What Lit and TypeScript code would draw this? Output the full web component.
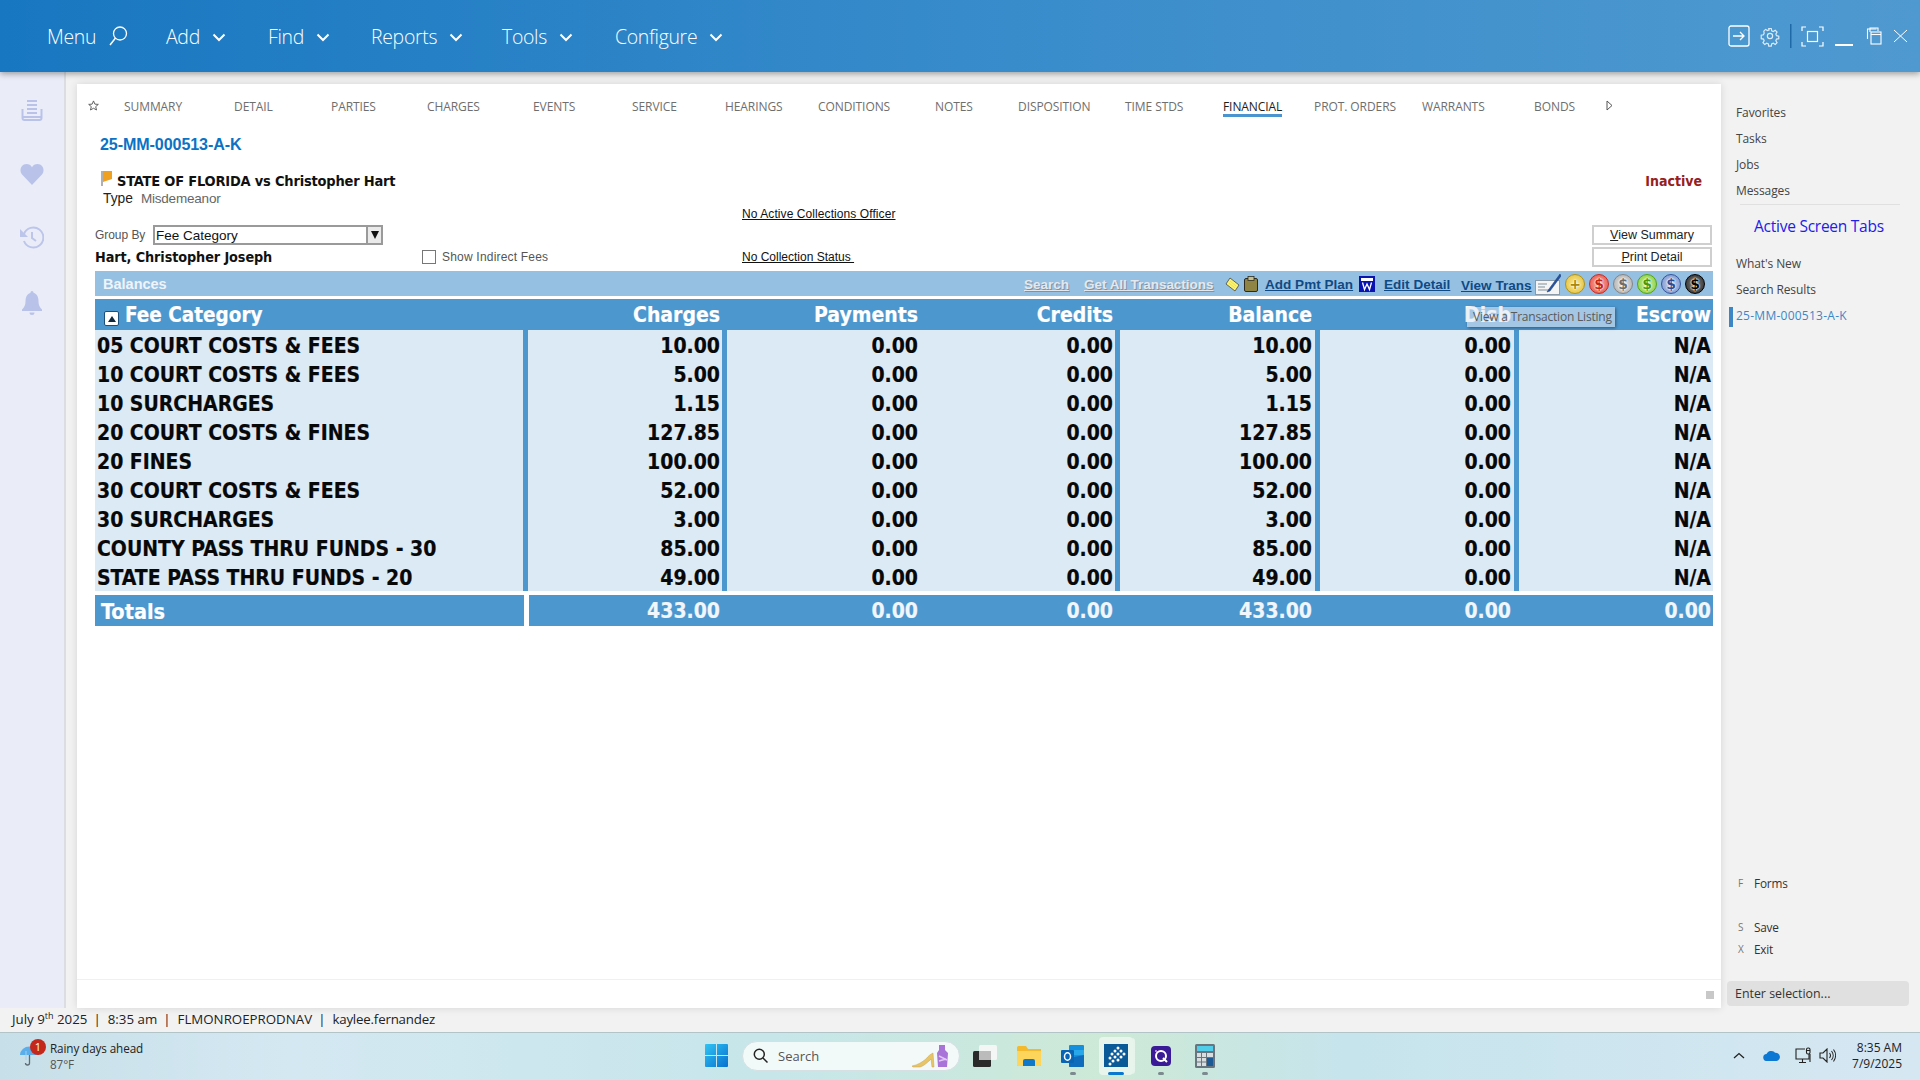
import { LitElement, html, css, svg } from "lit";
import { customElement } from "lit/decorators.js";

const chev = html`<svg class="chev" viewBox="0 0 14 9"><path d="M1.500 1.500 7 7l5.500-5.500" fill="none" stroke="#fff" stroke-width="2"/></svg>`;
const TABS = ["SUMMARY","DETAIL","PARTIES","CHARGES","EVENTS","SERVICE","HEARINGS","CONDITIONS","NOTES","DISPOSITION","TIME STDS","FINANCIAL","PROT. ORDERS","WARRANTS","BONDS"];
const ROWS: string[][] = [
  ["05 COURT COSTS & FEES","10.00","10.00"],
  ["10 COURT COSTS & FEES","5.00","5.00"],
  ["10 SURCHARGES","1.15","1.15"],
  ["20 COURT COSTS & FINES","127.85","127.85"],
  ["20 FINES","100.00","100.00"],
  ["30 COURT COSTS & FEES","52.00","52.00"],
  ["30 SURCHARGES","3.00","3.00"],
  ["COUNTY PASS THRU FUNDS - 30","85.00","85.00"],
  ["STATE PASS THRU FUNDS - 20","49.00","49.00"],
];

@customElement("app-root")
export class AppRoot extends LitElement {
  static styles = css`
    :host { display:flex; flex-direction:column; width:1920px; height:1080px; overflow:hidden; background:#f2f2f2; font-family:"Open Sans",sans-serif; color:#222; }
    svg { display:block; flex:none; }

    .hdr { height:72px; flex:none; display:flex; align-items:center; position:relative; z-index:3; padding-left:47px; background:linear-gradient(90deg,#1877c1,#3a8dcb 55%,#4f99d0); box-shadow:0 2px 6px rgba(0,0,0,.35); color:#fff; }
    .nav { display:grid; grid-template-columns:119px 102px 103px 131px 113px auto; font-size:19.400px; font-weight:300; letter-spacing:-.28px; }
    .nav div { display:flex; align-items:center; gap:12px; }
    .chev { width:14px; height:9px; margin-top:3px; }
    .hicons { margin-left:auto; margin-right:12px; display:flex; align-items:center; }
    .hicons svg { overflow:visible; }

    .mid { flex:1; display:flex; min-height:0; }
    .side { width:64px; flex:none; background:#eaedf8; border-right:2px solid #dcdde2; display:flex; flex-direction:column; align-items:center; padding-top:27px; gap:41.500px; }
    .card { width:1644px; margin:12px 0 0 11px; background:#fff; box-shadow:0 0 8px rgba(0,0,0,.12); display:flex; flex-direction:column; }

    .tabs { display:grid; grid-template-columns:36px 110px 97px 96px 106px 99px 93px 93px 117px 83px 107px 98px 91px 108px 112px 72px auto; height:22px; margin:11px 0 0 11px; align-items:start; font-size:12px; letter-spacing:-.08px; color:#6e6e6e; }
    .tabs > svg { margin-top:5px; }
    .tab { display:flex; height:22px; }
    .tab span { height:22px; line-height:23px; box-sizing:border-box; }
    .tab.on span { color:#1d1d1d; border-bottom:3px solid #4a95cf; }

    .body { padding-left:18px; }
    .caseno { margin:17px 0 0 5px; font:bold 16.100px/20px "Liberation Sans",sans-serif; color:#0b72c4; letter-spacing:-.1px; }
    .title { display:flex; align-items:center; height:20px; margin:17px 0 0 5px; }
    .title svg { margin-top:-5px; }
    .title b { font:bold 14.500px/20px "DejaVu Sans Condensed","Liberation Sans",sans-serif; color:#111; margin-left:5px; letter-spacing:-.2px; }
    .inactive { margin-left:auto; margin-right:19px; font:bold 14px/20px "DejaVu Sans Condensed","Liberation Sans",sans-serif; color:#962020; }
    .type { margin-left:8px; font:13.800px/16px "Liberation Sans",sans-serif; height:16px; display:flex; gap:8px; }
    .type i { font-style:normal; color:#666; letter-spacing:-.2px; font-size:13.500px; }
    .coll { margin-left:647px; height:18px; font:12px/14px "Liberation Sans",sans-serif; letter-spacing:.08px; }
    .lnk { text-decoration:underline; color:#111; }
    .ctl { display:grid; grid-template-columns:327px 320px 1fr 120px; grid-auto-rows:20px; row-gap:2px; padding-right:9px; align-items:center; font:12px "Liberation Sans",sans-serif; }
    .grp { display:flex; align-items:center; color:#555; }
    .grp label { width:58px; letter-spacing:-.05px; }
    .sel { width:230px; height:20px; box-sizing:border-box; border:2px solid #9a9a9a; display:flex; align-items:center; justify-content:space-between; font-size:13.500px; color:#111; padding-left:1px; }
    .sel s { width:13px; height:16px; background:#eaeaea; border-left:2px solid #9a9a9a; display:flex; justify-content:center; align-items:center; }
    .sel s::after { content:""; border:4px solid transparent; border-top:8px solid #111; border-bottom:0; }
    .btn { height:20px; box-sizing:border-box; border:2px solid #cfcfcf; display:flex; align-items:center; justify-content:center; font-size:12.500px; color:#222; }
    .btn u { text-decoration:underline; }
    .name { font:bold 14.300px "DejaVu Sans Condensed","Liberation Sans",sans-serif; color:#111; letter-spacing:-.1px; }
    .chk { display:flex; align-items:center; gap:6px; color:#555; letter-spacing:.2px; }
    .chk i { width:12px; height:12px; border:1px solid #777; }

    .bar { margin:4px 8px 0 0; height:25px; background:#96c0e2; display:flex; align-items:center; justify-content:space-between; padding:0 6px 0 8px; color:#fff; font:bold 13.500px "Liberation Sans",sans-serif; }
    .bar > b { color:#eef4fa; font-size:14.500px; }
    .tools { display:grid; grid-template-columns:60px 141px 19px 21px 94px 25px 77px 74px 28px repeat(6,24px); align-items:center; padding-top:1px; }
    .tools span.dis { color:#e4e8ec; text-decoration:underline; text-shadow:1px 1px 0 #8192a3; letter-spacing:-.03px; }
    .tools span.act { color:#0e4a85; text-decoration:underline; letter-spacing:.03px; }
    .tools span.low2 { margin-top:3px; }
    .coin { width:20px; height:20px; box-sizing:border-box; border-radius:50%; border:1px solid; display:flex; align-items:center; justify-content:center; font:bold 14px/1 "DejaVu Sans",sans-serif; margin-left:2px; text-shadow:0 0 1px #fff,0 0 1.500px #fff,0 0 2px #fff; }
    .gold { border-color:#b39210; background:radial-gradient(#f8e9a0,#e2bd2e); color:#a8860f; }
    .red { border-color:#c82a20; background:radial-gradient(#f6b0aa,#e8483c); color:#c8221a; }
    .gray { border-color:#858585; background:radial-gradient(#e8e8e8,#a8a8a8); color:#6c6c6c; }
    .green { border-color:#52a512; background:radial-gradient(#d2f0a8,#7ccc30); color:#459a0c; }
    .blue { border-color:#34559e; background:radial-gradient(#c8d4ee,#6f8ccc); color:#2e4c96; }
    .black { border-color:#000; background:radial-gradient(#888,#222); color:#050505; }

    .tbl { margin-top:3px; position:relative; width:1618px; font:bold 21px "DejaVu Sans Condensed","Liberation Sans",sans-serif; -webkit-text-stroke:.2px currentColor; }
    .r { display:grid; grid-template-columns:433px 199px 195px 198px 200px 199px 194px; height:29px; align-items:center; }
    .r > div { text-align:right; padding-top:1px; }
    .rows .r > div { padding-top:3px; }
    .r > div:nth-child(1) { text-align:left; padding-left:2px; }
    .r > div:nth-child(2) { padding-right:7px; }
    .r > div:nth-child(3) { padding-right:4px; }
    .r > div:nth-child(4) { padding-right:7px; }
    .r > div:nth-child(5) { padding-right:8px; }
    .r > div:nth-child(6) { padding-right:8px; }
    .r > div:nth-child(7) { padding-right:2px; }
    .hd { height:31px; background:#4d97cf; color:#fff; }
    .hd > div:nth-child(1) { display:flex; align-items:center; padding-left:9px; gap:6px; font-size:20.500px; }
    .sort { width:13px; height:13px; border:1px solid #1d4f7c; border-radius:2px; background:#fff; margin-top:7px; display:flex; align-items:center; justify-content:center; }
    .sort::after { content:""; border:4px solid transparent; border-bottom:6px solid #12283c; border-top:0; }
    .rows { background:#dceaf6; color:#080808; height:261px; }
    .rows .r { background:linear-gradient(#4d97cf,#4d97cf) 428px 0/5px 100% no-repeat,linear-gradient(#4d97cf,#4d97cf) 627px 0/5px 100% no-repeat,linear-gradient(#4d97cf,#4d97cf) 1020px 0/5px 100% no-repeat,linear-gradient(#4d97cf,#4d97cf) 1220px 0/5px 100% no-repeat,linear-gradient(#4d97cf,#4d97cf) 1419px 0/5px 100% no-repeat; }
    .tot { height:31px; margin-top:4px; background:linear-gradient(90deg,#4d97cf 429px,#fff 429px,#fff 434px,#4d97cf 434px); color:#f0f6fb; }
    .tot > div:nth-child(1) { padding-left:6px; font-size:21.500px; color:#fff; }
    .tip { position:absolute; left:1372px; top:8px; width:148px; height:20px; box-sizing:border-box; background:rgba(222,232,241,.6); box-shadow:1px 1px 3px rgba(0,0,0,.4); font:12px/20px "Open Sans",sans-serif; -webkit-text-stroke:0; letter-spacing:-.2px; color:#5a5a5a; padding-left:6px; white-space:nowrap; }

    .foot { margin-top:auto; height:29px; border-top:1px solid #f0f0f0; box-sizing:border-box; display:flex; align-items:center; justify-content:flex-end; padding:0 7px 0 0; }
    .foot i { width:8px; height:8px; background:#c8c8c8; margin-top:2px; }

    .rp { flex:1; display:flex; flex-direction:column; padding:28px 0 2px 15px; font-size:12px; letter-spacing:-.1px; color:#444; }
    .it { height:26px; line-height:26px; position:relative; }
    .hr { width:160px; height:1px; background:#e0e0e0; margin:0 0 0 4px; }
    .ast { height:24px; line-height:24px; margin:9px 0 13px 18px; font-size:15.500px; letter-spacing:-.25px; color:#2020e8; }
    .cur { color:#3d86c6; letter-spacing:.25px; }
    .cur::before { content:""; position:absolute; left:-7px; top:4px; width:4px; height:20px; background:#3d86c6; }
    .low { margin-top:auto; display:flex; flex-direction:column; font-size:11.800px; letter-spacing:-.2px; color:#333; }
    .low div { display:flex; height:22px; align-items:center; }
    .low i { width:18px; padding-left:2px; box-sizing:border-box; font-style:normal; font-size:10px; color:#777; }
    .gapb { margin-top:22px; }
    .inp { width:182px; height:25px; margin:21px 0 0 -9px; background:#e0e0e0; border-radius:4px; padding-left:8px; box-sizing:border-box; line-height:25px; font-size:12.400px; letter-spacing:0; color:#333; }

    .st { height:24px; flex:none; font-size:13.300px; line-height:22px; padding-left:12px; color:#222; }
    .st sup { font-size:9px; line-height:0; }
    .st em { font-style:normal; margin:0 7px 0 6px; }
    .st span { letter-spacing:-.2px; }
    .tb { height:48px; flex:none; box-sizing:border-box; padding-bottom:2px; border-top:1px solid #b3c4c8; display:grid; grid-template-columns:705px 1fr auto; align-items:center; background:linear-gradient(90deg,#c7dfe8 0,#d4e8f2 15%,#c6e6ea 40%,#cde9d6 58%,#c6e4ec 70%,#d6e7f2 100%); }
    .wx { display:flex; align-items:center; padding-left:20px; position:relative; }
    .wx .bd { position:absolute; left:30px; top:-1px; width:16px; height:16px; border-radius:50%; background:#c4281c; color:#fff; font-size:11px; line-height:16px; text-align:center; }
    .wx p { margin:0 0 0 10px; font-size:11.700px; line-height:16px; letter-spacing:-.1px; color:#222; }
    .wx p span { display:block; color:#555; }
    .ct { display:flex; align-items:center; }
    .sb { width:218px; height:30px; margin-left:14px; box-sizing:border-box; border-radius:15px; background:rgba(246,251,251,.9); border:1px solid #d6e0e2; display:flex; align-items:center; padding-left:10px; font-size:13px; color:#555; }
    .sb span { margin:0 auto 0 10px; }
    .ti { position:relative; height:38px; display:flex; align-items:center; justify-content:center; }
    .ti::after { content:""; position:absolute; bottom:0; left:50%; margin-left:-3px; width:6px; height:3px; border-radius:2px; background:#7c8a90; }
    .ti.n::after { display:none; }
    .ti.cur2 { background:rgba(255,255,255,.55); border-radius:4px; box-shadow:3px 0 0 -1px rgba(255,255,255,.5); }
    .ti.cur2::after { width:16px; margin-left:-8px; background:#0b78d0; }
    .tr { display:flex; align-items:center; padding-right:18px; color:#222; }
    .clk { margin-left:16px; text-align:right; font-size:12px; line-height:16px; letter-spacing:0; }
  `;

  private tool(cls: string, t: string) { return html`<span class=${cls}>${t}</span>`; }

  render() {
    return html`
      <div class="hdr">
        <div class="nav">
          <div>Menu <svg width="20" height="22" viewBox="0 0 20 22"><circle cx="12" cy="8.500" r="6.500" fill="none" stroke="#fff" stroke-width="1.300"/><path d="M7.500 13 2 20" stroke="#fff" stroke-width="1.500"/></svg></div>
          <div>Add ${chev}</div><div>Find ${chev}</div><div>Reports ${chev}</div><div>Tools ${chev}</div><div>Configure ${chev}</div>
        </div>
        <div class="hicons">
          <svg width="22" height="22" viewBox="0 0 22 22"><rect x="1" y="1" width="20" height="20" rx="2" fill="none" stroke="#fff" stroke-width="1.300"/><path d="M5 11h11M12 7l4 4-4 4" fill="none" stroke="#fff" stroke-width="1.300"/></svg>
          <svg style="margin-left:11px" width="18" height="18" viewBox="0 0 24 24" fill="none" stroke="#dcebf7" stroke-width="1.600"><circle cx="12" cy="12" r="3.500"/><path d="M10.300 2h3.400l.5 3 2.200 1 2.600-1.600 2.400 2.400-1.600 2.600.9 2.200 3 .6v3.400l-3 .5-.9 2.200 1.600 2.600-2.400 2.400-2.600-1.600-2.200.9-.5 3h-3.400l-.5-3-2.200-.9-2.600 1.600-2.400-2.400 1.600-2.600-.9-2.200-3-.5V11l3-.6.9-2.200L3.700 5.600 6.100 3.200l2.600 1.600 2.200-1z"/></svg>
          <svg style="margin-left:11px" width="2" height="24"><rect width="1.500" height="24" fill="#1f6aa6"/></svg>
          <svg style="margin-left:9px" width="23" height="21" viewBox="0 0 23 21" fill="none" stroke="#fff" stroke-width="1.200"><path d="M5 1H1v4M18 1h4v4M1 16v4h4M22 16v4h-4"/><rect x="6.500" y="5.500" width="10" height="10"/></svg>
          <svg style="margin-left:11px;margin-top:18px" width="18" height="2"><rect width="18" height="2" fill="#fff"/></svg>
          <svg style="margin-left:13px" width="16" height="18" viewBox="0 0 16 18" fill="none" stroke="#fff" stroke-width="1.100"><path d="M4 5V1h8v3"/><path d="M1.500 12V2h9"/><rect x="5" y="5" width="10" height="12" fill="#4f99d0"/><path d="M5 7.500h10"/></svg>
          <svg style="margin-left:11px" width="15" height="14" viewBox="0 0 15 14"><path d="M1 1l13 12M14 1 1 13" stroke="#fff" stroke-width="1"/></svg>
        </div>
      </div>

      <div class="mid">
        <div class="side">
          <svg width="22" height="22" viewBox="0 0 22 22" fill="none" stroke="#b9c3ea" stroke-width="2"><path d="M6 2h10M6 6h10M6 10h10M6 14h10"/><path d="M1.500 10v9a2 2 0 0 0 2 2h15a2 2 0 0 0 2-2v-9" /><path d="M1.500 18h19"/></svg>
          <svg width="24" height="22" viewBox="0 0 24 22"><path fill="#b9c3ea" d="M12 22 2 11.500C-1 8 .5 1 6.500 1c2.500 0 4.300 1.200 5.500 3.200C13.200 2.200 15 1 17.500 1c6 0 7.500 7 4.500 10.500z"/></svg>
          <svg width="24" height="23" viewBox="0 0 24 23" fill="none" stroke="#bcc5ea" stroke-width="2"><path d="M4 8a10 10 0 1 1 0 7"/><path fill="#bcc5ea" stroke="none" d="M0 3l0 8 8 0z"/><path d="M12 6v6l4 3"/></svg>
          <svg width="20" height="24" viewBox="0 0 20 24"><path fill="#b9c3ea" d="M10 0c1 0 1.500.8 1.500 1.800C15 3 16.500 6 16.500 10c0 4 1 6 3.500 8.500V20H0v-1.500C2.500 16 3.500 14 3.500 10c0-4 1.500-7 5-8.200C8.500.8 9 0 10 0zM7.500 21.500h5A2.500 2.500 0 0 1 7.500 21.500z"/></svg>
        </div>

        <div class="card">
          <div class="tabs">
            <svg width="11" height="11" viewBox="0 0 24 24" fill="none" stroke="#555" stroke-width="2"><path d="m12 2 3 7 7.500.6-5.700 4.900 1.800 7.300L12 18l-6.600 3.800 1.800-7.300L1.500 9.600 9 9z"/></svg>
            ${TABS.map(t => html`<div class="tab ${t === "FINANCIAL" ? "on" : ""}"><span>${t}</span></div>`)}
            <svg width="7" height="11" viewBox="0 0 7 11"><path d="M1 1v9l5-4.500z" fill="#fff" stroke="#555"/></svg>
          </div>
          <div class="body">
            <div class="caseno">25-MM-000513-A-K</div>
            <div class="title">
              <svg width="12" height="15" viewBox="0 0 12 15"><path d="M1 0h2v15H1z" fill="#b0b0b0"/><path d="M3 0h9v8l-9 3z" fill="#f0a020"/></svg>
              <b>STATE OF FLORIDA vs Christopher Hart</b>
              <div class="inactive">Inactive</div>
            </div>
            <div class="type">Type <i>Misdemeanor</i></div>
            <div class="coll"><span class="lnk">No Active Collections Officer</span></div>
            <div class="ctl">
              <div class="grp"><label>Group By</label><div class="sel">Fee Category<s></s></div></div>
              <div></div><div></div>
              <div class="btn"><span><u>V</u>iew Summary</span></div>
              <div class="name">Hart, Christopher Joseph</div>
              <div class="chk"><i></i>Show Indirect Fees</div>
              <div><span class="lnk">No Collection Status&nbsp;</span></div>
              <div class="btn"><span><u>P</u>rint Detail</span></div>
            </div>
            <div class="bar">
              <b>Balances</b>
              <div class="tools">
                ${this.tool("dis", "Search")}
                ${this.tool("dis", "Get All Transactions")}
                <svg width="15" height="15" viewBox="0 0 15 15"><path d="M5 1 14 8l-4 6L1 7z" fill="#fbf370" stroke="#333" stroke-width=".7"/><path d="M5 4l6 5M4 6l6 5" stroke="#ece05a"/></svg>
                <svg width="14" height="16" viewBox="0 0 14 16"><rect x=".5" y="2.500" width="13" height="13" rx="1.500" fill="#8f8444" stroke="#2a2a20"/><rect x="4" y=".5" width="6" height="4" fill="#c8c08c" stroke="#2a2a20" stroke-width=".8"/></svg>
                ${this.tool("act", "Add Pmt Plan")}
                <svg width="16" height="16" viewBox="0 0 16 16"><rect width="16" height="16" fill="#0a12b0"/><rect x="2" y="2" width="12" height="3" fill="#fff"/><path d="M3.500 6.500 5.500 13.500 8 8l2.500 5.500 2-7" fill="none" stroke="#fff" stroke-width="1.300"/></svg>
                ${this.tool("act", "Edit Detail")}
                ${this.tool("act low2", "View Trans")}
                <svg width="26" height="22" viewBox="0 0 26 22"><rect x=".5" y="7.500" width="24" height="14" fill="#f4f4f4" stroke="#8a9aa8"/><path d="M3 11h9M3 14h7M3 17h11" stroke="#7f8f9d"/><path d="M25 1 14 16l-2 3 3-1L26 3z" fill="#2453a4" stroke="#16356e" stroke-width=".5"/></svg>
                <div class="coin gold">+</div><div class="coin red">$</div><div class="coin gray">$</div><div class="coin green">$</div><div class="coin blue">$</div><div class="coin black">$</div>
              </div>
            </div>
            <div class="tbl">
              <div class="r hd">
                <div><span class="sort"></span>Fee Category</div>
                <div>Charges</div><div>Payments</div><div>Credits</div><div>Balance</div><div>Disb</div><div>Escrow</div>
              </div>
              <div class="rows">
                ${ROWS.map(r => html`<div class="r"><div>${r[0]}</div><div>${r[1]}</div><div>0.00</div><div>0.00</div><div>${r[2]}</div><div>0.00</div><div>N/A</div></div>`)}
              </div>
              <div class="r tot"><div>Totals</div><div>433.00</div><div>0.00</div><div>0.00</div><div>433.00</div><div>0.00</div><div>0.00</div></div>
              <div class="tip">View a Transaction Listing</div>
            </div>
          </div>
          <div class="foot"><i></i></div>
        </div>

        <div class="rp">
          <div class="it">Favorites</div><div class="it">Tasks</div><div class="it">Jobs</div><div class="it">Messages</div>
          <div class="hr"></div>
          <div class="ast">Active Screen Tabs</div>
          <div class="it">What's New</div><div class="it">Search Results</div><div class="it cur">25-MM-000513-A-K</div>
          <div class="low">
            <div><i>F</i>Forms</div>
            <div class="gapb"><i>S</i>Save</div>
            <div><i>X</i>Exit</div>
            <span class="inp">Enter selection...</span>
          </div>
        </div>
      </div>

      <div class="st">July 9<sup>th</sup> 2025<em>|</em>8:35 am<em>|</em>FLMONROEPRODNAV<em>|</em><span>kaylee.fernandez</span></div>

      <div class="tb">
        <div class="wx">
          <svg width="20" height="20" viewBox="0 0 20 20"><path d="M0 9a9 8 0 0 1 19 0z" fill="#5aaeea"/><path d="M6 5v9" stroke="#9fd2f4"/><path d="M9.500 9v8a2 2 0 0 1-4 0" fill="none" stroke="#5f6c76" stroke-width="1.300"/></svg>
          <span class="bd">1</span>
          <p>Rainy days ahead<span>87°F</span></p>
        </div>
        <div class="ct">
          <svg width="23" height="23" viewBox="0 0 23 23"><defs><linearGradient id="w" x1="0" y1="0" x2="1" y2="1"><stop offset="0" stop-color="#30c4f4"/><stop offset="1" stop-color="#0670d0"/></linearGradient></defs><path fill="url(#w)" d="M0 1a1 1 0 0 1 1-1h10v11H0zM12 0h10a1 1 0 0 1 1 1v10H12zM0 12h11v11H1a1 1 0 0 1-1-1zM12 12h11v10a1 1 0 0 1-1 1H12z"/></svg>
          <div class="sb">
            <svg width="15" height="15" viewBox="0 0 15 15" fill="none" stroke="#222" stroke-width="1.500"><circle cx="6.300" cy="6.300" r="5"/><path d="m10 10 4.500 4.500"/></svg>
            <span>Search</span>
            <svg width="40" height="24" viewBox="0 0 40 24"><path d="M1 22c6-1 10-4 14-7 2-3 5-5 7-6l1 14h-2l-1-8c-3 3-7 7-11 8H2z" fill="#e8c468" stroke="#c9a24a" stroke-width=".5"/><path d="M28 1h6v5l3 3-1 14h-9l-1-14 2-3z" fill="#a874d8"/><path d="M28 12l8 4M28 17l7-2" stroke="#e2c8f6" stroke-width="1.500"/></svg>
            <i style="width:8px"></i>
          </div>
          <div class="ti n" style="width:24px;margin-left:13px"><svg width="24" height="22" viewBox="0 0 24 22"><rect y="6" width="18" height="16" rx="1.500" fill="#2a2a2a"/><rect x="6" width="18" height="15" rx="1.500" fill="#f4f6f6"/><rect x="6" y="6" width="12" height="9" fill="#bbb"/></svg></div>
          <div class="ti n" style="width:24px;margin-left:20px"><svg width="24" height="20" viewBox="0 0 24 20"><path d="M0 1.500A1.500 1.500 0 0 1 1.500 0H9l2 3h13v15.500a1.500 1.500 0 0 1-1.500 1.500h-21A1.500 1.500 0 0 1 0 18.500z" fill="#f4b92c"/><path d="M0 5h24v13.500a1.500 1.500 0 0 1-1.500 1.500h-21A1.500 1.500 0 0 1 0 18.500z" fill="#fdd55a"/><path d="M6 15a2 2 0 0 1 2-2h8a2 2 0 0 1 2 2v5H6z" fill="#1078c8"/></svg></div>
          <div class="ti" style="width:24px;margin-left:20px"><svg width="24" height="24" viewBox="0 0 24 24"><rect x="8" y="1" width="15" height="22" rx="1" fill="#1490df"/><path d="M8 6h15v5H8z" fill="#28a8ea"/><path d="M8 14l15-3v11a1 1 0 0 1-1 1H9a1 1 0 0 1-1-1z" fill="#0f6cbd"/><rect y="6" width="13" height="13" rx="1" fill="#0a64b4"/><ellipse cx="6.500" cy="12.500" rx="3" ry="3.700" fill="none" stroke="#fff" stroke-width="1.500"/></svg></div>
          <div class="ti cur2" style="width:34px;margin-left:14px"><svg width="24" height="23" viewBox="0 0 24 23"><rect width="24" height="23" fill="#0a5a98"/><g fill="#fff">${[[14,4],[11,7],[17,7],[8,10],[14,10],[20,10],[11,13],[17,13],[6,14],[14,16],[9,17],[6,20]].map(p => svg`<circle cx=${p[0]} cy=${p[1]} r="1.500"/>`)}</g></svg></div>
          <div class="ti" style="width:20px;margin-left:18px"><svg width="20" height="20" viewBox="0 0 20 20"><rect width="20" height="20" rx="4" fill="#3a1a96"/><circle cx="10" cy="10" r="5" fill="none" stroke="#fff" stroke-width="2"/><path d="M12 12l4 4" stroke="#fff" stroke-width="2"/><circle cx="5" cy="5" r="1" fill="#d8a0f0"/></svg></div>
          <div class="ti" style="width:20px;margin-left:24px"><svg width="20" height="24" viewBox="0 0 20 24"><rect width="20" height="24" rx="1.500" fill="#68747e"/><rect x="2" y="2" width="16" height="5" fill="#50cde8"/><g fill="#d8dde0"><rect x="2" y="9" width="4" height="4"/><rect x="7" y="9" width="4" height="4"/><rect x="12" y="9" width="6" height="4"/><rect x="2" y="14" width="4" height="3.500"/><rect x="7" y="14" width="4" height="3.500"/><rect x="2" y="18.500" width="4" height="3.500"/><rect x="7" y="18.500" width="4" height="3.500"/></g><rect x="12" y="14" width="6" height="8" fill="#1c5a96"/></svg></div>
        </div>
        <div class="tr">
          <svg width="12" height="7" viewBox="0 0 12 7"><path d="M1 6 6 1.500 11 6" fill="none" stroke="#222" stroke-width="1.300"/></svg>
          <svg style="margin-left:18px" width="17" height="11" viewBox="0 0 17 11"><path d="M4 11a3.500 3.500 0 0 1-.5-7A5 5 0 0 1 12 2.800 4 4 0 0 1 13.500 11z" fill="#0c78d4"/></svg>
          <svg style="margin-left:15px" width="17" height="17" viewBox="0 0 17 17" fill="none" stroke="#222" stroke-width="1.100"><path d="M10 2H1v10h13V7M7.500 12v3M4 15.500h7"/><rect x="11.500" y="1" width="3.500" height="6" rx="1.500"/><path d="M11.500 3.500h3.500M15 7v8"/></svg>
          <svg style="margin-left:7px" width="17" height="15" viewBox="0 0 17 15" fill="none" stroke="#222" stroke-width="1.100"><path d="M1 5h3l4-4v13l-4-4H1zM10.500 5a4 4 0 0 1 0 5M12.500 3a7 7 0 0 1 0 9M14.500 1.500a10 10 0 0 1 0 12"/></svg>
          <div class="clk">8:35 AM<br/>7/9/2025</div>
        </div>
      </div>
    `;
  }
}
